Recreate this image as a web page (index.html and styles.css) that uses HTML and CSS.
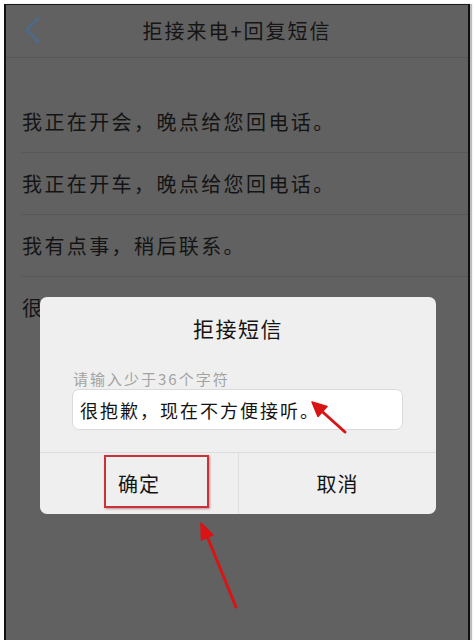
FILE: index.html
```html
<!DOCTYPE html>
<html lang="zh">
<head>
<meta charset="utf-8">
<title>拒接来电+回复短信</title>
<link rel="stylesheet" href="styles.css">
</head>
<body>
<div class="frame">
  <header class="nav">
    <svg class="back" width="16" height="28" viewBox="0 0 16 28"><polyline points="13,2 2,13.5 13,26" fill="none" stroke="#4a6d8f" stroke-width="2.4" stroke-linecap="round" stroke-linejoin="round"/></svg>
    <div class="nav-title">拒接来电+回复短信</div>
    <div></div>
  </header>
  <ul class="list">
    <li class="row">我正在开会，晚点给您回电话。</li>
    <li class="row">我正在开车，晚点给您回电话。</li>
    <li class="row">我有点事，稍后联系。</li>
    <li class="row row-last">很抱歉，现在不方便接听。</li>
  </ul>

  <div class="dialog">
    <div class="dlg-title">拒接短信</div>
    <div class="dlg-body">
      <div class="hint">请输入少于36个字符</div>
      <div class="input">很抱歉，现在不方便接听。</div>
    </div>
    <div class="actions">
      <div class="btn">确定</div>
      <div class="btn btn-right">取消</div>
    </div>
  </div>
</div>

<div class="highlight"></div>
<svg class="arrows" width="475" height="640" viewBox="0 0 475 640">
  <g fill="#d91414" stroke="#d91414" stroke-linecap="round" stroke-linejoin="round">
    <line x1="345" y1="432" x2="321" y2="410.5" stroke-width="3"/>
    <polygon points="312,402 327,406.5 318,416.5" stroke-width="1.5"/>
    <line x1="236" y1="607" x2="207" y2="536" stroke-width="3"/>
    <polygon points="201,523 213,535 201.5,540" stroke-width="1.5"/>
  </g>
</svg>
</body>
</html>
```
FILE: styles.css
```css
html, body {
  margin: 0;
  padding: 0;
}
body {
  position: relative;
  width: 475px;
  height: 640px;
  overflow: hidden;
  background: #ffffff;
  font-family: "Noto Sans CJK SC", "Noto Sans", sans-serif;
}
.frame {
  position: relative;
  margin: 4px 0 0 4px;
  width: 462px;
  height: 700px;
  border-top: 1px solid #1a1a1a;
  border-left: 2px solid #111;
  border-right: 2px solid #111;
  background: #616161;
  box-shadow: 2px 0 1px #bdbdbd;
}
.nav {
  height: 52px;
  display: grid;
  grid-template-columns: 1fr auto 1fr;
  align-items: center;
  border-bottom: 1px solid #575757;
  padding-left: 19px;
  padding-right: 19px;
}
.back {
  display: block;
  margin-top: -2px;
}
.nav-title {
  font-size: 20px;
  letter-spacing: 2px;
  color: #151515;
  line-height: 26px;
}
.list {
  list-style: none;
  margin: 33px 0 0 0;
  padding: 0;
}
.row {
  margin-left: 16px;
  height: 61px;
  border-bottom: 1px solid #575757;
  display: flex;
  align-items: center;
  font-size: 20px;
  letter-spacing: 2.4px;
  color: #141414;
}
.row-last {
  border-bottom: none;
}
.dialog {
  position: absolute;
  left: 34px;
  top: 292px;
  width: 396px;
  height: 217px;
  background: #efefef;
  border-radius: 7px;
  display: flex;
  flex-direction: column;
}
.dlg-title {
  padding-top: 18px;
  line-height: 26px;
  font-size: 21px;
  text-align: center;
  color: #141414;
  letter-spacing: 1.5px;
}
.dlg-body {
  padding: 0 33px 0 32px;
  margin-top: 28px;
  flex: 1;
}
.hint {
  padding-left: 1px;
  font-size: 15px;
  line-height: 20px;
  letter-spacing: 2px;
  color: #a3a3a3;
}
.input {
  margin-top: 0;
  height: 39px;
  background: #ffffff;
  border: 1px solid #dadada;
  border-radius: 7px;
  padding-left: 7px;
  display: flex;
  align-items: center;
  font-size: 18px;
  letter-spacing: 2px;
  color: #141414;
}
.actions {
  height: 61px;
  border-top: 1px solid #dcdcdc;
  display: grid;
  grid-template-columns: 1fr 1fr;
}
.btn {
  display: flex;
  align-items: center;
  justify-content: center;
  font-size: 20px;
  letter-spacing: 1px;
  color: #141414;
}
.btn-right {
  border-left: 1px solid #dedede;
}
.highlight {
  position: absolute;
  left: 104px;
  top: 455px;
  width: 101px;
  height: 49px;
  border: 2px solid #c8323a;
  box-shadow: 1px 1px 2px rgba(120, 0, 0, 0.4);
}
.arrows {
  position: absolute;
  left: 0;
  top: 0;
}
```
